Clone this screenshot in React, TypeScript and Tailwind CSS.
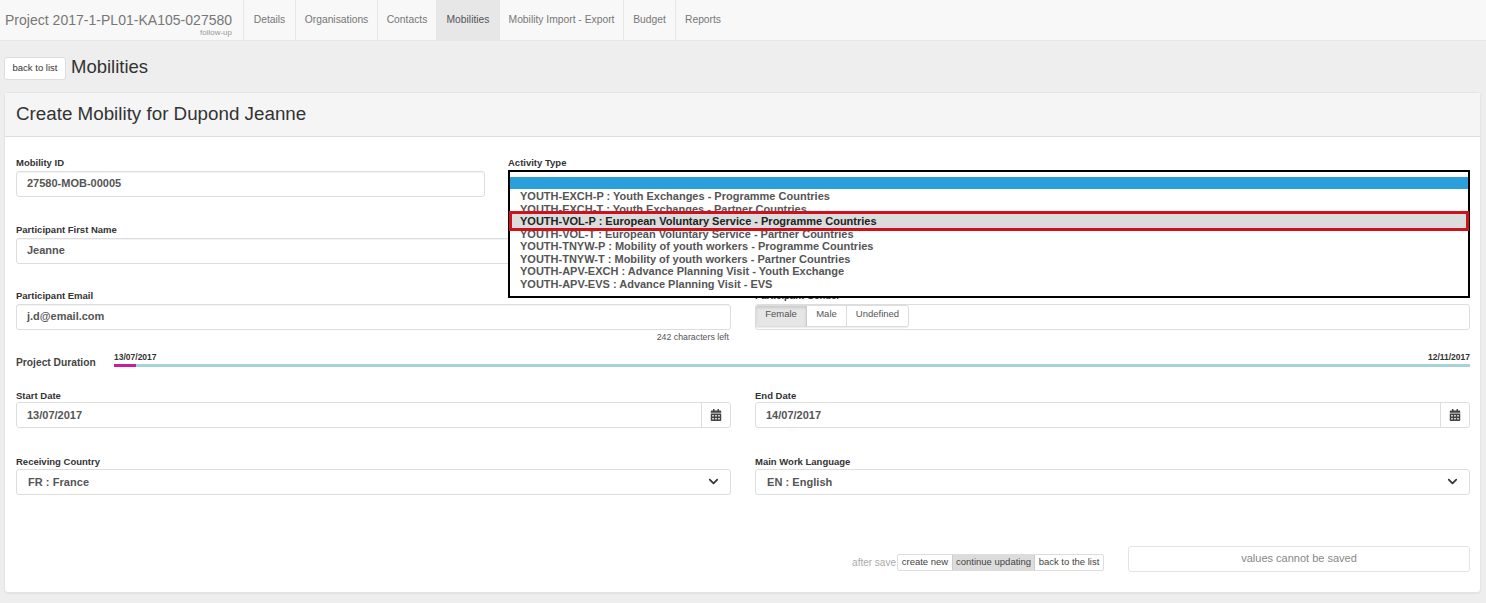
import { ChevronDown } from "lucide-react";
import { FaCalendarAlt } from "react-icons/fa";

const tabs = [
  { name: "Details", width: "w-[52px]" },
  { name: "Organisations", width: "w-[82px]" },
  { name: "Contacts", width: "w-[59px]" },
  { name: "Mobilities", width: "w-[63px]" },
  { name: "Mobility Import - Export", width: "w-[124px]" },
  { name: "Budget", width: "w-[52px]" },
  { name: "Reports", width: "w-[55px]" },
];

const options = [
  "YOUTH-EXCH-P : Youth Exchanges - Programme Countries",
  "YOUTH-EXCH-T : Youth Exchanges - Partner Countries",
  "YOUTH-VOL-P : European Voluntary Service - Programme Countries",
  "YOUTH-VOL-T : European Voluntary Service - Partner Countries",
  "YOUTH-TNYW-P : Mobility of youth workers - Programme Countries",
  "YOUTH-TNYW-T : Mobility of youth workers - Partner Countries",
  "YOUTH-APV-EXCH : Advance Planning Visit - Youth Exchange",
  "YOUTH-APV-EVS : Advance Planning Visit - EVS",
];

function Label({ text }: { text: string }) {
  return <div className="h-[14px] text-[9.5px] leading-[14px] font-bold text-[#333]">{text}</div>;
}

function Field({ label, value }: { label: string; value: string }) {
  return (
    <div className="flex-1">
      <Label text={label} />
      <div className="mt-[1px] flex h-[26px] items-center rounded-[3px] border border-[#ddd] bg-white pb-[1px] pl-[10px] text-[11px] font-bold text-[#555] shadow-[inset_0_1px_1px_rgba(0,0,0,0.05)]">
        {value}
      </div>
    </div>
  );
}

function DateField({ label, value }: { label: string; value: string }) {
  return (
    <div className="flex-1">
      <Label text={label} />
      <div className="-mt-[1px] flex h-[26px] items-center rounded-[3px] border border-[#ddd] bg-white text-[11px] font-bold text-[#555]">
        <span className="flex-1 pl-[10px] pt-[1px]">{value}</span>
        <span className="flex h-full w-[29px] items-center justify-center border-l border-[#ddd] text-[#444]">
          <FaCalendarAlt size={12} />
        </span>
      </div>
    </div>
  );
}

function SelectField({ label, value }: { label: string; value: string }) {
  return (
    <div className="flex-1">
      <Label text={label} />
      <div className="flex h-[26px] items-center justify-between rounded-[3px] border border-[#ddd] bg-white pl-[11px] pr-[9px] text-[11px] font-bold tracking-[0.05px] text-[#555]">
        <span className="pt-[1px]">{value}</span>
        <ChevronDown size={15} strokeWidth={2.75} className="text-[#333]" />
      </div>
    </div>
  );
}

export default function App() {
  return (
    <div className="h-[603px] overflow-hidden bg-[#eeeeee] font-['Liberation_Sans',Arial,sans-serif]">
      <nav className="flex h-[41px] border-b border-[#e7e7e7] bg-[#f8f8f8]">
        <div className="w-[243px] pl-[5px] pr-[11px] pt-[12px] text-right">
          <div className="whitespace-nowrap text-left text-[14px] leading-[16px] tracking-[0.02px] text-[#777]">Project 2017-1-PL01-KA105-027580</div>
          <div className="pt-[1px] text-[8px] leading-[7px] text-[#999]">follow-up</div>
        </div>
        {tabs.map((tab) => (
          <div
            key={tab.name}
            className={
              tab.name === "Mobilities"
                ? `flex flex-none items-center justify-center border-l border-[#e7e7e7] bg-[#e7e7e7] text-[10.3px] text-[#555] ${tab.width}`
                : `flex flex-none items-center justify-center border-l border-[#e7e7e7] text-[10.3px] text-[#777] ${tab.width}`
            }
          >
            {tab.name}
          </div>
        ))}
      </nav>

      <div className="flex items-center gap-[5px] px-[4px] pt-[15px]">
        <button className="h-[23px] w-[62px] rounded-[3px] border border-[#ddd] bg-white pt-[1px] text-[9.5px] text-[#333]">back to list</button>
        <h1 className="pb-[2px] text-[18.5px] leading-[22px] text-[#333]">Mobilities</h1>
      </div>

      <section className="mx-[4px] mt-[12px] h-[501px] w-[1477px] rounded-[4px] border border-[#e4e4e4] bg-white shadow-[0_1px_1px_rgba(0,0,0,0.05)]">
        <div className="flex h-[44px] items-center border-b border-[#ddd] bg-[#f5f5f5] pl-[11px] text-[18.8px] text-[#333]">
          Create Mobility for Dupond Jeanne
        </div>

        <div className="pl-[11px] pr-[10px] pt-[19px]">
          <div className="flex gap-[23px]">
            <div className="w-[469px] flex-none">
              <Field label="Mobility ID" value="27580-MOB-00005" />
            </div>
            <div className="relative flex-1">
              <Label text="Activity Type" />
              <div className="absolute left-0 right-0 top-[14px] z-20 h-[128px] border-2 border-black bg-white pt-[5px]">
                <div className="h-[12px] bg-[#2a9fdb]" />
                <div className="pt-[1px] text-[11px] font-bold text-[#555]">
                  {options.map((option, i) =>
                    i === 2 ? (
                      <div key={option} className="relative h-[12.5px]">
                        <div className="absolute -left-[1px] -right-[1px] -top-[4px] z-10 flex h-[20px] items-center border-[3px] border-[#d0101a] bg-[#dcdcdc] pl-[8px] leading-none text-[#222]">
                          {option}
                        </div>
                      </div>
                    ) : (
                      <div key={option} className="h-[12.5px] pl-[10px] leading-[12.5px]">
                        {option}
                      </div>
                    ),
                  )}
                </div>
              </div>
            </div>
          </div>

          <div className="mt-[25.5px] flex gap-[24px]">
            <Field label="Participant First Name" value="Jeanne" />
            <Field label="Participant Last Name" value="Dupond" />
          </div>

          <div className="mt-[25px] flex gap-[24px]">
            <div className="flex-1">
              <Field label="Participant Email" value="j.d@email.com" />
              <div className="mt-[1px] pr-[2px] text-right text-[8.8px] leading-[12px] text-[#555]">242 characters left</div>
            </div>
            <div className="flex-1">
              <Label text="Participant Gender" />
              <div className="mt-[1px] h-[26px] rounded-[3px] border border-[#ddd] bg-white">
                <div className="-ml-[1px] flex h-[22px] w-[154px] overflow-hidden rounded-[3px] border border-[#ddd] text-[9.5px] text-[#555] shadow-[0_1px_1px_rgba(0,0,0,0.08)]">
                  <span className="flex w-[51px] items-center justify-center border-r border-[#ccc] bg-[#e6e6e6] pb-[3px] shadow-[inset_0_2px_3px_rgba(0,0,0,0.12)]">Female</span>
                  <span className="flex w-[40px] items-center justify-center border-r border-[#ddd] pb-[3px]">Male</span>
                  <span className="flex flex-1 items-center justify-center pb-[3px]">Undefined</span>
                </div>
              </div>
            </div>
          </div>

          <div className="mt-[9px] flex items-end">
            <div className="w-[98px] flex-none text-[10.25px] font-bold leading-[12px] text-[#444]">Project Duration</div>
            <div className="flex-1">
              <div className="flex justify-between text-[8.5px] font-bold leading-[10px] text-[#333]">
                <span>13/07/2017</span>
                <span>12/11/2017</span>
              </div>
              <div className="mb-[2px] mt-[2.5px] h-[3px] bg-[#a5d3da]">
                <div className="h-full w-[22px] bg-[#c81e9e]" />
              </div>
            </div>
          </div>

          <div className="mt-[19.5px] flex gap-[24px]">
            <DateField label="Start Date" value="13/07/2017" />
            <DateField label="End Date" value="14/07/2017" />
          </div>

          <div className="mt-[27px] flex gap-[24px]">
            <SelectField label="Receiving Country" value="FR : France" />
            <SelectField label="Main Work Language" value="EN : English" />
          </div>

          <div className="mt-[51px] flex items-end justify-end gap-[24px]">
            <div className="flex items-center pb-[1px]">
              <span className="pr-[1px] text-[10px] text-[#aaa]">after save</span>
              <div className="flex h-[17px] rounded-[2px] border border-[#ddd] text-[9.5px] text-[#444]">
                <span className="flex w-[55px] items-center justify-center border-r border-[#ccc]">create new</span>
                <span className="flex w-[82px] items-center justify-center border-r border-[#ccc] bg-[#dcdcdc]">continue updating</span>
                <span className="flex w-[68px] items-center justify-center">back to the list</span>
              </div>
            </div>
            <div className="flex h-[26px] w-[342px] items-center justify-center rounded-[3px] border border-[#e4e4e4] text-[11px] text-[#888]">
              values cannot be saved
            </div>
          </div>
        </div>
      </section>
    </div>
  );
}
